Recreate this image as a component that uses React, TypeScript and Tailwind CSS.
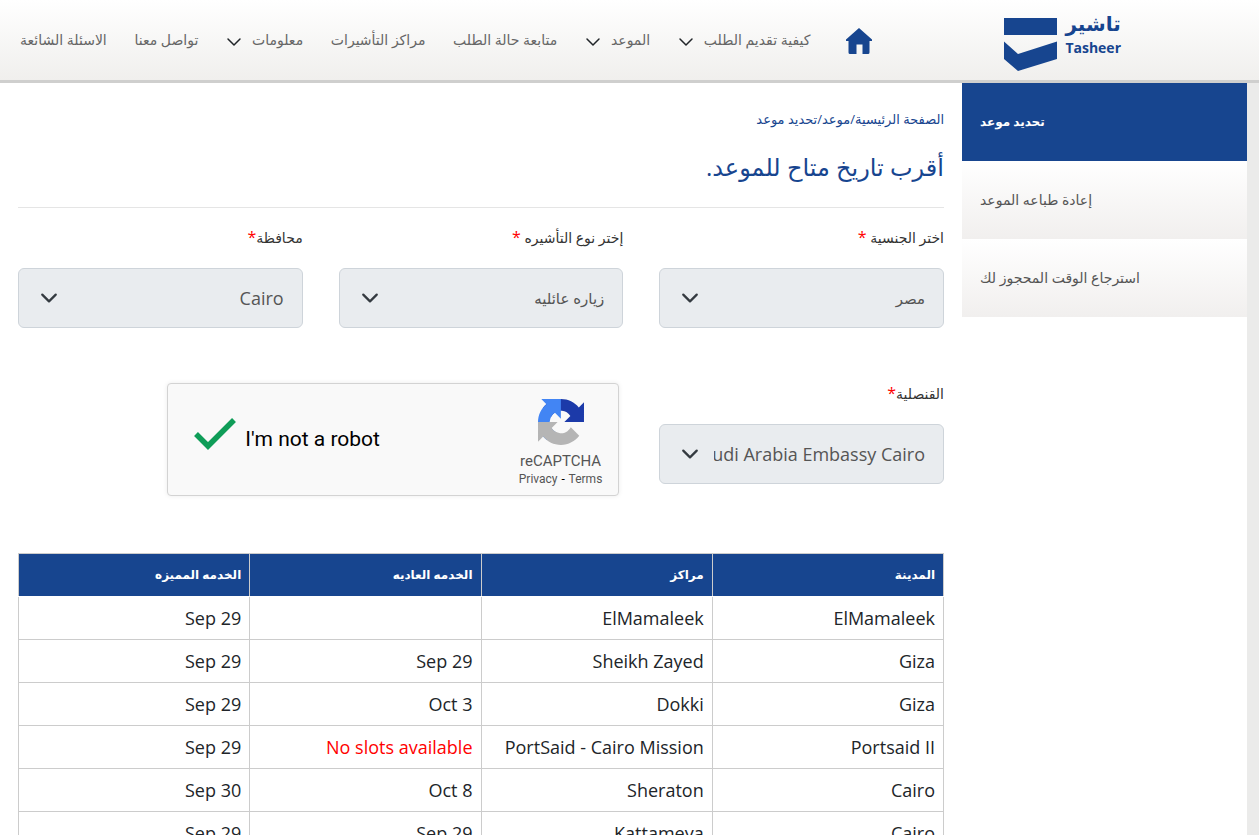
import React from "react";
import clsx from "clsx";

type NavItem = { name: string; menu?: boolean };

const navigation: NavItem[] = [
  { name: "كيفية تقديم الطلب", menu: true },
  { name: "الموعد", menu: true },
  { name: "متابعة حالة الطلب" },
  { name: "مراكز التأشيرات" },
  { name: "معلومات", menu: true },
  { name: "تواصل معنا" },
  { name: "الاسئلة الشائعة" },
];

const sideLinks: string[] = [
  "تحديد موعد",
  "إعادة طباعه الموعد",
  "استرجاع الوقت المحجوز لك",
];

const columns: string[] = ["المدينة", "مراكز", "الخدمه العاديه", "الخدمه المميزه"];

const slots: string[][] = [
  ["ElMamaleek", "ElMamaleek", "", "Sep 29"],
  ["Giza", "Sheikh Zayed", "Sep 29", "Sep 29"],
  ["Giza", "Dokki", "Oct 3", "Sep 29"],
  ["Portsaid II", "PortSaid - Cairo Mission", "No slots available", "Sep 29"],
  ["Cairo", "Sheraton", "Oct 8", "Sep 30"],
  ["Cairo", "Kattameya", "Sep 29", "Sep 29"],
];

const Chevron = ({ className }: { className?: string }) => (
  <svg
    viewBox="0 0 16 16"
    fill="none"
    stroke="currentColor"
    strokeLinecap="round"
    strokeLinejoin="round"
    className={className}
    aria-hidden="true"
  >
    <path d="m2 5 6 6 6-6" />
  </svg>
);

const Logo = () => (
  <a href="#" className="flex gap-2 text-[#17458f]" dir="ltr">
    <svg viewBox="0 0 53 53" className="mt-2 h-[53px] w-[53px]" fill="currentColor" aria-hidden="true">
      <path d="M0 0h53v17H0z" />
      <path d="M0 23.500 14 36l39-12.500V41L14 53 0 41z" />
    </svg>
    <span className="flex flex-col">
      <span className="text-[20px] leading-7 font-bold">تاشير</span>
      <span className="text-[14px] leading-5 font-bold">Tasheer</span>
    </span>
  </a>
);

const Header = () => {
  return (
    <header className="flex h-[83px] shrink-0 items-start border-b-3 border-[#cfcfce] bg-linear-to-b from-white to-[#f0efed] ps-[138px] pe-5">
      <div className="pt-[10px]">
        <Logo />
      </div>
      <a href="#" aria-label="الصفحة الرئيسية" className="ms-[132px] mt-7 text-[#17458f]">
        <svg viewBox="0 0 26 26" className="size-[26px]" fill="currentColor" aria-hidden="true">
          <path d="M13 0 26 11.500V13h-2.500v11.500a1.500 1.500 0 0 1-1.500 1.500H16.500v-9.500h-6V26H4a1.500 1.500 0 0 1-1.500-1.500V13H0v-1.500z" />
        </svg>
      </a>
      <nav className="ms-9 mt-7 flex flex-1 items-center justify-between" aria-label="Global">
        {navigation.map((item) => (
          <a
            key={item.name}
            href="#"
            className="flex items-center gap-[10px] text-[14px] leading-6 whitespace-nowrap text-[#666]"
          >
            {item.name}
            {item.menu && <Chevron className="mt-1 size-4 stroke-[1.5] text-[#212529]" />}
          </a>
        ))}
      </nav>
    </header>
  );
};

type FieldProps = { id: string; label: string; value: string; spaced?: boolean };

const Field = ({ id, label, value, spaced }: FieldProps) => (
  <div>
    <label htmlFor={id} className="block h-6 text-[14px] leading-5 text-[#333]">
      {label}
      {spaced && " "}
      <span className="text-base leading-5 text-[#ff0000]">*</span>
    </label>
    <div className="relative mt-[17px]">
      <select
        id={id}
        defaultValue={value}
        className={clsx(
          "h-[60px] w-full appearance-none rounded-md border border-[#ced4da] bg-[#e9ecef] ps-[18px] pe-[54px] text-[#555]",
          /^[A-Z]/.test(value) ? "text-lg" : "text-[15px]"
        )}
      >
        <option value={value}>{value}</option>
      </select>
      <Chevron className="pointer-events-none absolute top-[21px] left-[22px] size-[18px] stroke-2 text-[#343a40]" />
    </div>
  </div>
);

const Captcha = () => (
  <div
    dir="ltr"
    className="flex h-[113px] w-[452px] items-center rounded-[4px] border border-[#d3d3d3] bg-[#f9f9f9] ps-[25px] pe-4 font-[Roboto,sans-serif] shadow-[0_0_5px_rgba(0,0,0,0.08)]"
  >
    <label className="flex flex-1 items-center gap-2 text-[21px] text-black">
      <input type="checkbox" defaultChecked className="peer sr-only" />
      <svg viewBox="0 0 44 34" className="mb-3 h-[34px] w-11" fill="none" aria-hidden="true">
        <path d="m3 17 12 12L41 3" stroke="#0f9d58" strokeWidth="5.500" />
      </svg>
      <span>I'm not a robot</span>
    </label>
    <div className="flex flex-col items-center pt-1 text-[#555]">
      <svg viewBox="0 0 64 64" className="size-[46px]" aria-hidden="true">
        <path
          fill="#1c3aa9"
          d="M64 31.955l-.033-1.370V4.687l-7.160 7.160C50.948 4.674 42.033.093 32.050.093c-10.400 0-19.622 4.960-25.458 12.640l11.736 11.860a15.550 15.550 0 0 1 4.754-5.334c2.050-1.600 4.952-2.906 8.968-2.906.485 0 .860.057 1.135.163 4.976.393 9.288 3.140 11.828 7.124l-8.307 8.307L64 31.953"
        />
        <path
          fill="#4285f4"
          d="M31.862.094l-1.370.033H4.594l7.160 7.160C4.580 13.147 0 22.060 0 32.046c0 10.400 4.960 19.622 12.640 25.458L24.500 45.768a15.550 15.550 0 0 1-5.334-4.754c-1.600-2.050-2.906-4.952-2.906-8.968 0-.485.057-.860.163-1.135.393-4.976 3.140-9.288 7.124-11.828l8.307 8.307L31.860.095"
        />
        <path
          fill="#b5b5b5"
          d="M.001 32.045l.033 1.370v25.898l7.160-7.160c5.860 7.173 14.774 11.754 24.760 11.754 10.400 0 19.622-4.960 25.458-12.640l-11.736-11.860a15.550 15.550 0 0 1-4.754 5.334c-2.050 1.600-4.952 2.906-8.968 2.906-.485 0-.860-.057-1.135-.163-4.976-.393-9.288-3.140-11.828-7.124l8.307-8.307L.001 32.046"
        />
      </svg>
      <span className="mt-1 text-[15px] leading-6">reCAPTCHA</span>
      <span className="text-[12px] leading-3">
        <a href="#">Privacy</a> <span className="px-px text-black">-</span> <a href="#">Terms</a>
      </span>
    </div>
  </div>
);

const SlotTable = () => (
  <table className="mt-[57px] w-full table-fixed border-collapse text-right text-lg text-[#212529]">
    <thead>
      <tr className="h-[43px] bg-[#17458f] text-[12px] text-white">
        {columns.map((column) => (
          <th key={column} scope="col" className="border border-[#ccc] border-b-white px-2 leading-6 font-bold">
            {column}
          </th>
        ))}
      </tr>
    </thead>
    <tbody>
      {slots.map((row, i) => (
        <tr key={i} className="h-[43px]">
          {row.map((cell, j) => (
            <td
              key={j}
              dir="ltr"
              className={clsx(
                "border border-[#ccc] px-2 leading-6",
                cell === "No slots available" && "text-[#ff0000]"
              )}
            >
              {cell}
            </td>
          ))}
        </tr>
      ))}
    </tbody>
  </table>
);

const App = () => {
  return (
    <div
      dir="rtl"
      className="flex min-h-screen flex-col bg-[#ebebea] font-['Open_Sans','DejaVu_Sans',sans-serif]"
    >
      <Header />
      <div className="ms-3 flex flex-1 bg-white">
        <aside className="w-[285px] shrink-0 text-left">
          {sideLinks.map((name, i) => (
            <a
              key={name}
              href="#"
              className={clsx(
                "block px-[18px] py-[27px] leading-6",
                i === 0
                  ? "bg-[#17458f] text-[12px] font-bold text-white"
                  : "bg-linear-to-b from-white to-[#f1efee] text-[14px] text-[#555]"
              )}
            >
              {name}
            </a>
          ))}
        </aside>
        <main className="min-w-0 flex-1 px-[18px] pt-6">
          <div className="text-[13px] leading-6 text-[#17458f]">
            <a href="#">الصفحة الرئيسية</a>/<a href="#">موعد</a>/<span>تحديد موعد</span>
          </div>
          <h1 className="mt-4 border-b border-[#e5e5e5] pb-5 text-[24px] leading-10 text-[#17458f]">
            أقرب تاريخ متاح للموعد.
          </h1>
          <form className="mt-[19px] grid grid-cols-3 gap-x-9 gap-y-[55px]">
            <Field id="nationality" label="اختر الجنسية" value="مصر" spaced />
            <Field id="visa-type" label="إختر نوع التأشيره" value="زياره عائليه" spaced />
            <Field id="province" label="محافظة" value="Cairo" />
            <Field id="consulate" label="القنصلية" value="Saudi Arabia Embassy Cairo" />
            <div className="col-span-2 ps-1">
              <Captcha />
            </div>
          </form>
          <SlotTable />
        </main>
      </div>
    </div>
  );
};

export default App;
